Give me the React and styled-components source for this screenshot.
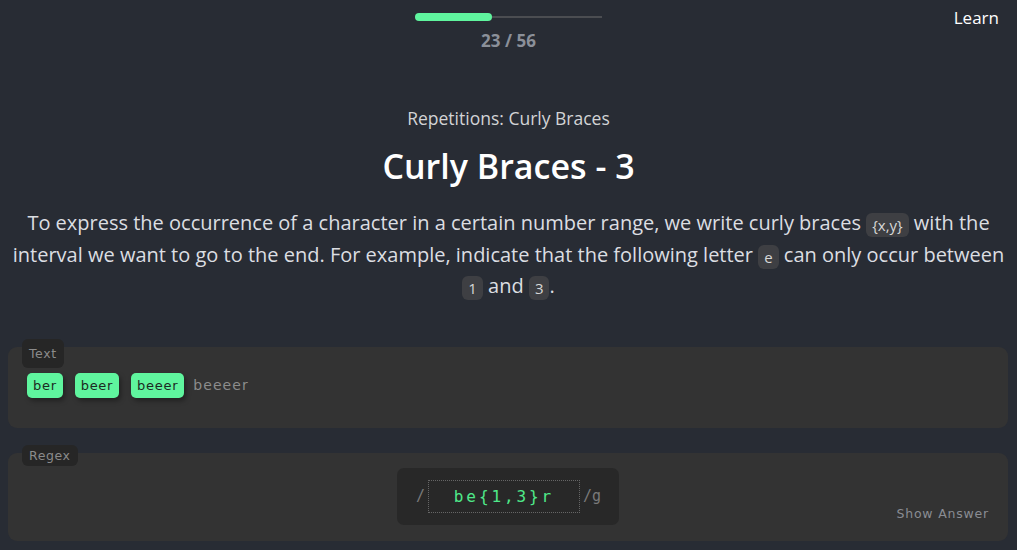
import React from 'react';
import styled, { createGlobalStyle } from 'styled-components';

const Global = createGlobalStyle`
  html, body {
    margin: 0;
    padding: 0;
    background: #282c34;
    font-family: 'Open Sans', 'Noto Sans', sans-serif;
    color: #fff;
  }
`;

const Page = styled.div`
  width: 1017px;
  height: 550px;
  overflow: hidden;
`;

const Header = styled.header`
  display: grid;
  grid-template-columns: 1fr auto 1fr;
  padding-top: 13px;
`;

const Progress = styled.div`
  display: flex;
  flex-direction: column;
  align-items: center;
`;

const Track = styled.div`
  width: 187px;
  height: 8px;
  display: flex;
  align-items: center;
  background: linear-gradient(#4b4d51, #4b4d51) center / 100% 2px no-repeat;
`;

const Fill = styled.div`
  height: 8px;
  border-radius: 4px;
  background: #5ff59e;
`;

const Count = styled.div`
  margin-top: 8px;
  font-size: 17px;
  font-weight: 700;
  color: #8b9099;
`;

const Learn = styled.a`
  justify-self: end;
  margin-right: 18px;
  margin-top: -7px;
  font-size: 17px;
  color: #fff;
  text-decoration: none;
`;

const Intro = styled.section`
  display: flex;
  flex-direction: column;
  align-items: center;
  text-align: center;
  padding: 0 8px;
  margin-top: 54px;
`;

const Subtitle = styled.div`
  font-size: 17.5px;
  color: #d3d4d6;
`;

const Title = styled.h1`
  margin: 13px 0 0;
  font-size: 34px;
  font-weight: 600;
  line-height: 46px;
  color: #fff;
`;

const Desc = styled.p`
  margin: 18px 0 0;
  font-size: 20px;
  line-height: 31.5px;
  color: #dcdee2;
`;

const Code = styled.code`
  display: inline-block;
  font-family: 'Open Sans', sans-serif;
  font-size: 15px;
  line-height: 24px;
  padding: 0 6px;
  border-radius: 6px;
  background: #3e3f43;
  color: #d7d7d7;
  vertical-align: -1px;
`;

const Panel = styled.div`
  position: relative;
  margin: ${p => p.$top}px 9px 0 8px;
  min-height: ${p => p.$h}px;
  box-sizing: border-box;
  background: #333333;
  border-radius: 9px;
  padding: ${p => p.$pad};
`;

const Label = styled.span`
  position: absolute;
  top: -8px;
  left: 14px;
  padding: ${p => p.$pad};
  border-radius: 6px;
  background: #262626;
  color: #8b8b8b;
  font-family: 'DejaVu Sans', sans-serif;
  font-size: 12.5px;
  letter-spacing: 0.6px;
  line-height: 17px;
`;

const Words = styled.div`
  display: flex;
  align-items: center;
  gap: 12px;
`;

const Match = styled.span`
  display: inline-block;
  padding: 0 6px;
  line-height: 25px;
  border-radius: 5px;
  background: #5ff59e;
  color: #1c2a22;
  font-family: 'DejaVu Sans', sans-serif;
  font-size: 13px;
  letter-spacing: 0.7px;
  box-shadow: 2px 3px 5px rgba(0, 0, 0, 0.35);
`;

const Plain = styled.span`
  margin-left: -3px;
  color: #8c8c8c;
  font-family: 'DejaVu Sans', sans-serif;
  font-size: 14px;
  letter-spacing: 1.1px;
`;

const RegexRow = styled.div`
  display: grid;
  grid-template-columns: 1fr auto 1fr;
  align-items: end;
`;

const RegexBox = styled.div`
  grid-column: 2;
  display: flex;
  align-items: center;
  height: 57px;
  padding: 0 18px 0 19px;
  border-radius: 7px;
  background: #282828;
  color: #7a7a7a;
  font-family: 'DejaVu Sans Mono', monospace;
  font-size: 15px;
`;

const Input = styled.div`
  width: 150px;
  height: 31px;
  margin: 0 3px 0 3px;
  display: flex;
  align-items: center;
  justify-content: center;
  border: 1px dotted #666;
  color: #4fe98a;
  font-family: 'DejaVu Sans Mono', monospace;
  font-size: 16px;
  letter-spacing: 2.9px;
`;

const ShowAnswer = styled.button`
  justify-self: end;
  margin: 0 10px 4px 0;
  padding: 0;
  border: 0;
  background: none;
  color: #8a8d93;
  font-family: 'DejaVu Sans', sans-serif;
  font-size: 12.5px;
  letter-spacing: 0.8px;
  cursor: pointer;
`;

export default function App() {
  const done = 23;
  const total = 56;
  return (
    <Page>
      <Global />
      <Header>
        <span />
        <Progress>
          <Track>
            <Fill style={{ width: `${(done / total) * 100}%` }} />
          </Track>
          <Count>{done} / {total}</Count>
        </Progress>
        <Learn href="#">Learn</Learn>
      </Header>

      <Intro>
        <Subtitle>Repetitions: Curly Braces</Subtitle>
        <Title>Curly Braces - 3</Title>
        <Desc>
          To express the occurrence of a character in a certain number range, we write curly braces <Code>{'{x,y}'}</Code> with the
          interval we want to go to the end. For example, indicate that the following letter <Code>e</Code> can only occur between{' '}
          <Code>1</Code> and <Code>3</Code>.
        </Desc>
      </Intro>

      <Panel $top={45} $h={81} $pad="26px 19px 0">
        <Label $pad="6px 7px">Text</Label>
        <Words>
          <Match>ber</Match>
          <Match>beer</Match>
          <Match>beeer</Match>
          <Plain>beeeer</Plain>
        </Words>
      </Panel>

      <Panel $top={25} $h={88} $pad="15px 9px 16px">
        <Label $pad="2px 7px">Regex</Label>
        <RegexRow>
          <RegexBox>
            /
            <Input>be{'{1,3}'}r</Input>
            /g
          </RegexBox>
          <ShowAnswer>Show Answer</ShowAnswer>
        </RegexRow>
      </Panel>
    </Page>
  );
}
